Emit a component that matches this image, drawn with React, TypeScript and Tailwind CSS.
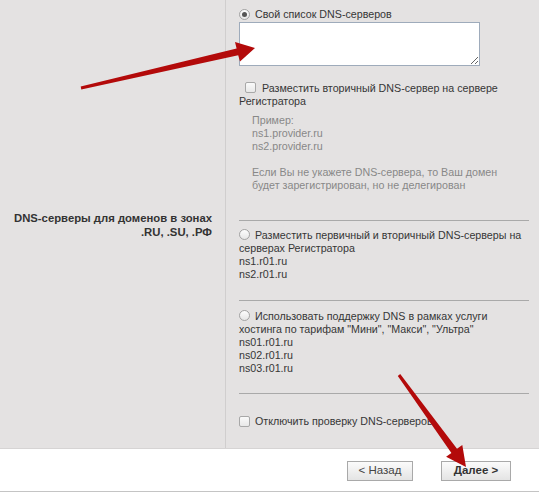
import React from "react";

function Radio({ checked }: { checked?: boolean }) {
  return (
    <span className="inline-flex w-[11px] h-[11px] rounded-full border border-[#a3a3a3] bg-gradient-to-b from-[#fdfdfd] to-[#e6e6e6] items-center justify-center align-[-1px] shrink-0">
      {checked ? <span className="block w-[5px] h-[5px] rounded-full bg-[#555]" /> : null}
    </span>
  );
}

function Check() {
  return (
    <span className="inline-block w-[11px] h-[11px] rounded-[2px] border border-[#a8a8a8] bg-gradient-to-b from-[#fafafa] to-[#e8e8e8] align-[-1px] shrink-0" />
  );
}

export default function App() {
  return (
    <div
      className="relative w-[539px] h-[494px] bg-white overflow-hidden text-[#363636]"
      style={{ fontFamily: '"Liberation Sans", Arial, sans-serif' }}
    >
      <div className="flex bg-[#e4e2e2] border-b border-[#d6d4d4] text-[10.7px] leading-[13px]">
        <div className="w-[225px] shrink-0 flex items-center justify-end pr-[13px]">
          <div className="text-right font-bold text-[11.3px] leading-[14px] text-[#333] mt-[2px]">
            DNS-серверы для доменов в зонах
            <br />
            .RU, .SU, .РФ
          </div>
        </div>
        <div className="flex-1 border-l border-[#d0cece] pl-[13px] pr-[10px] pt-[8px] pb-[20px]">
          <div className="flex items-center h-[13px]">
            <Radio checked />
            <span className="ml-[5px]">Свой список DNS-серверов</span>
          </div>
          <textarea className="block mt-[1px] w-[241px] h-[44px] border border-[#9eabbb] bg-white resize outline-none" />
          <div className="mt-[16px]">
            <span className="ml-[6px] mr-[6px]">
              <Check />
            </span>
            Разместить вторичный DNS-сервер на сервере Регистратора
          </div>
          <div className="mt-[6px] pl-[13px] text-[#888]">
            <div>Пример:</div>
            <div>ns1.provider.ru</div>
            <div>ns2.provider.ru</div>
            <div className="h-[13px]" />
            <div>Если Вы не укажете DNS-сервера, то Ваш домен</div>
            <div>будет зарегистрирован, но не делегирован</div>
          </div>
          <div className="mt-[28px] h-px bg-[#a9a9a9]" />
          <div className="mt-[8px]">
            <Radio />
            <span className="ml-[5px]">Разместить первичный и вторичный DNS-серверы на серверах Регистратора</span>
            <div>ns1.r01.ru</div>
            <div>ns2.r01.ru</div>
          </div>
          <div className="mt-[19px] h-px bg-[#a9a9a9]" />
          <div className="mt-[9px]">
            <Radio />
            <span className="ml-[5px]">
              Использовать поддержку DNS в рамках услуги хостинга по тарифам "Мини", "Макси", "Ультра"
            </span>
            <div>ns01.r01.ru</div>
            <div>ns02.r01.ru</div>
            <div>ns03.r01.ru</div>
          </div>
          <div className="mt-[18px] h-px bg-[#a9a9a9]" />
          <div className="mt-[21px] flex items-center h-[13px]">
            <Check />
            <span className="ml-[5px]">Отключить проверку DNS-серверов</span>
          </div>
        </div>
      </div>
      <div className="flex justify-end gap-[28px] pr-[28px] pt-[12px] pb-[10px] border-b border-[#c4c4c4] text-[11.5px]">
        <button className="w-[66px] h-[20px] border border-[#a9a9a9] bg-gradient-to-b from-[#fbfbfb] to-[#e4e4e4] text-[#444] leading-none">
          &lt; Назад
        </button>
        <button className="w-[70px] h-[20px] border border-[#a9a9a9] bg-gradient-to-b from-[#fbfbfb] to-[#e4e4e4] text-[#333] font-bold leading-none">
          Далее &gt;
        </button>
      </div>
      <svg className="absolute inset-0 pointer-events-none" width="539" height="494" viewBox="0 0 539 494">
        <polygon
          points="80.7,86.5 236.6,48.4 235,42 255,48 240,61.5 238.2,55.2 81.3,89.5"
          fill="#b30a0a"
        />
        <polygon
          points="397.8,375.9 451.4,452.9 446.1,456.7 466,467 462.3,444.9 457,448.7 400.2,374.1"
          fill="#b30a0a"
        />
      </svg>
    </div>
  );
}
